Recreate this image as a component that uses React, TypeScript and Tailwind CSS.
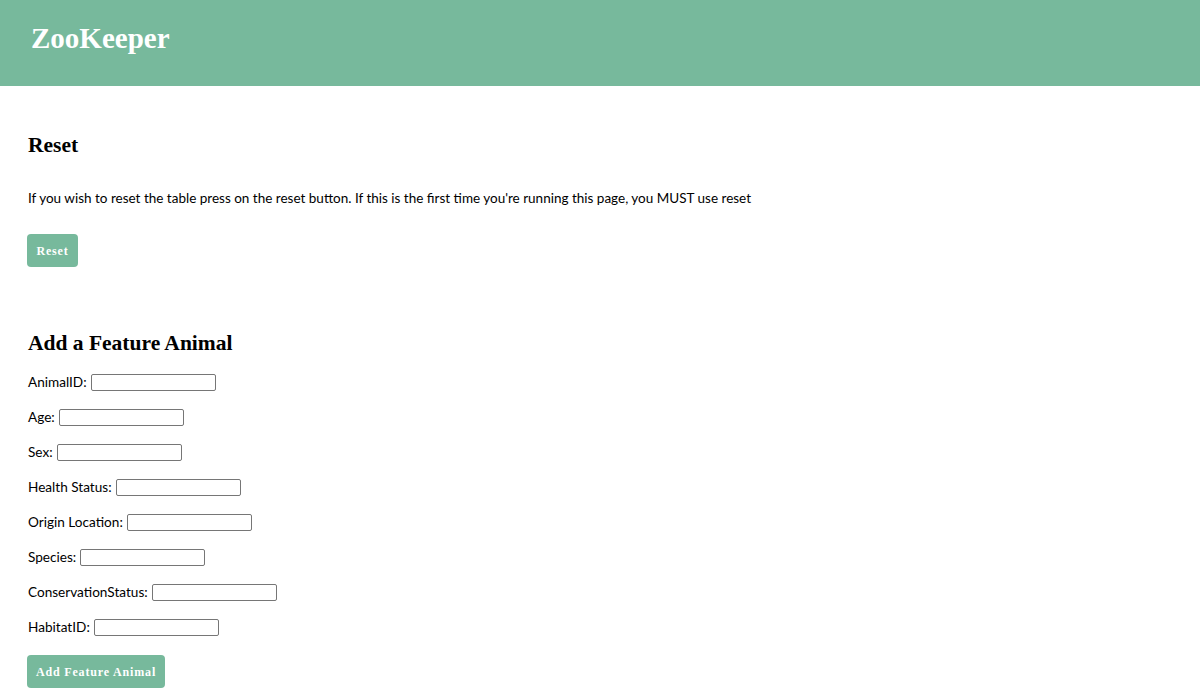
import React from 'react';

const fields = [
  'AnimalID',
  'Age',
  'Sex',
  'Health Status',
  'Origin Location',
  'Species',
  'ConservationStatus',
  'HabitatID',
];

const serif = "font-['Liberation_Serif',serif]";

const GreenButton: React.FC<{ children: React.ReactNode; className?: string }> = ({ children, className }) => (
  <button
    className={`${serif} h-[33px] rounded-[4px] bg-[#77b99c] px-0 text-[12px] font-bold tracking-[0.07em] text-white ${className ?? ''}`}
  >
    {children}
  </button>
);

export default function App() {
  return (
    <div className="min-h-screen bg-white font-['Lato',sans-serif] text-black">
      <header className="flex h-[86px] items-start bg-[#77b99c] pt-[20px] pl-[31px]">
        <h1 className={`${serif} text-[29px] font-bold leading-[36px] text-white`}>ZooKeeper</h1>
      </header>

      <main className="px-[28px]">
        <h2 className={`${serif} mt-[45px] text-[21.5px] font-bold leading-[28px]`}>Reset</h2>
        <p className="mt-[30px] text-[13.5px] leading-[18px]">
          If you wish to reset the table press on the reset button. If this is the first time you're running this
          page, you MUST use reset
        </p>
        <GreenButton className="mt-[27px] -ml-px w-[51px]">Reset</GreenButton>

        <h2 className={`${serif} mt-[62px] text-[21.5px] font-bold leading-[28px]`}>Add a Feature Animal</h2>
        <form className="mt-[8px] flex flex-col" onSubmit={(e) => e.preventDefault()}>
          {fields.map((f) => (
            <div key={f} className="flex h-[35px] items-center text-[13.6px]">
              <label>{f}:</label>
              <input
                type="text"
                className="ml-[4px] h-[17px] w-[125px] rounded-[2px] border border-[#767676] bg-white"
              />
            </div>
          ))}
        </form>
        <GreenButton className="mt-[10px] -ml-px w-[138px]">Add Feature Animal</GreenButton>
      </main>
    </div>
  );
}
